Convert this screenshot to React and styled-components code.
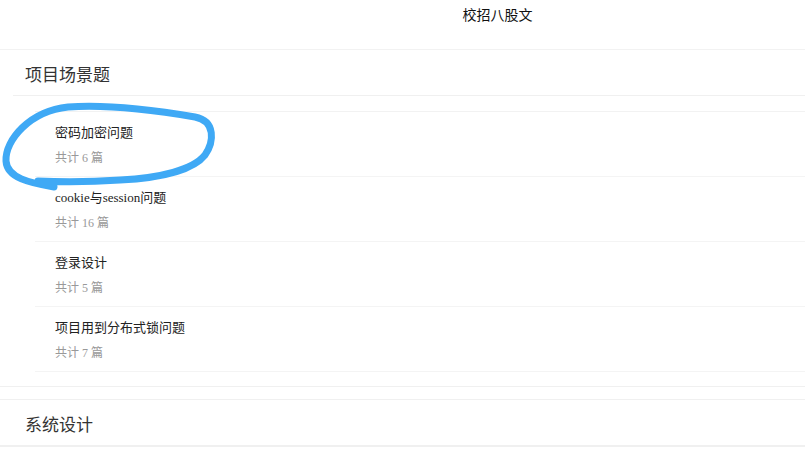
import React from 'react';
import styled, { createGlobalStyle } from 'styled-components';

const GlobalStyle = createGlobalStyle`
  html, body {
    margin: 0;
    padding: 0;
    background: #fff;
  }
  body {
    font-family: "Liberation Serif", "Noto Sans CJK SC", serif;
  }
`;

const sections = [
  {
    name: '项目场景题',
    items: [
      { title: '密码加密问题', count: 6 },
      { title: 'cookie与session问题', count: 16 },
      { title: '登录设计', count: 5 },
      { title: '项目用到分布式锁问题', count: 7 },
    ],
  },
  { name: '系统设计', items: [] },
];

const Page = styled.div`
  position: relative;
  width: 805px;
  height: 455px;
  overflow: hidden;
`;

const TopBar = styled.header`
  height: 49px;
  padding-left: 190px;
  display: flex;
  justify-content: center;
  border-bottom: 1px solid #f2f2f2;
`;

const Title = styled.h1`
  margin: 0;
  font-family: "Noto Sans CJK SC", sans-serif;
  font-size: 14px;
  font-weight: 400;
  line-height: 28px;
  color: #111;
`;

const Section = styled.section`
  border-bottom: 1px solid #f0f0f0;
  & + & {
    margin-top: 12px;
    border-top: 1px solid #f0f0f0;
  }
`;

const SectionHead = styled.h2`
  margin: 0 0 0 ${p => p.$indent}px;
  padding: 2px 0 0 ${p => 25 - p.$indent}px;
  height: 43px;
  display: flex;
  align-items: center;
  border-bottom: 1px solid #f0f0f0;
  font-family: "Noto Sans CJK SC", sans-serif;
  font-size: 17px;
  font-weight: 400;
  color: #333;
`;

const List = styled.ul`
  list-style: none;
  margin: 15px 0 14px 35px;
  padding: 0;
  border-top: 1px solid #f2f2f2;
`;

const Item = styled.li`
  padding: 13px 0 10px 20px;
  border-bottom: 1px solid #f4f4f4;
`;

const ItemTitle = styled.div`
  font-size: 13px;
  line-height: 16px;
  color: #222;
`;

const ItemCount = styled.div`
  margin-top: 9px;
  font-size: 12px;
  line-height: 16px;
  color: #999;
`;

const Mark = styled.svg`
  position: absolute;
  left: 0;
  top: 0;
  pointer-events: none;
`;

export default function App() {
  return (
    <Page>
      <GlobalStyle />
      <TopBar>
        <Title>校招八股文</Title>
      </TopBar>
      {sections.map((s, i) => (
        <Section key={s.name}>
          <SectionHead $indent={i === 0 ? 13 : 0}>{s.name}</SectionHead>
          {s.items.length > 0 && (
            <List>
              {s.items.map(it => (
                <Item key={it.title}>
                  <ItemTitle>{it.title}</ItemTitle>
                  <ItemCount>共计 {it.count} 篇</ItemCount>
                </Item>
              ))}
            </List>
          )}
        </Section>
      ))}
      <Mark width="805" height="455" viewBox="0 0 805 455">
        <path
          d="M54 187 C30 183 7 178 6 161 C5 140 30 111 68 107 C110 104 160 111 195 117 C216 121 214 142 205 155 C193 170 160 178 120 180 C90 182 62 182 38 181"
          fill="none"
          stroke="#3fa9f5"
          strokeWidth="7"
          strokeLinecap="round"
          strokeLinejoin="round"
        />
      </Mark>
    </Page>
  );
}
